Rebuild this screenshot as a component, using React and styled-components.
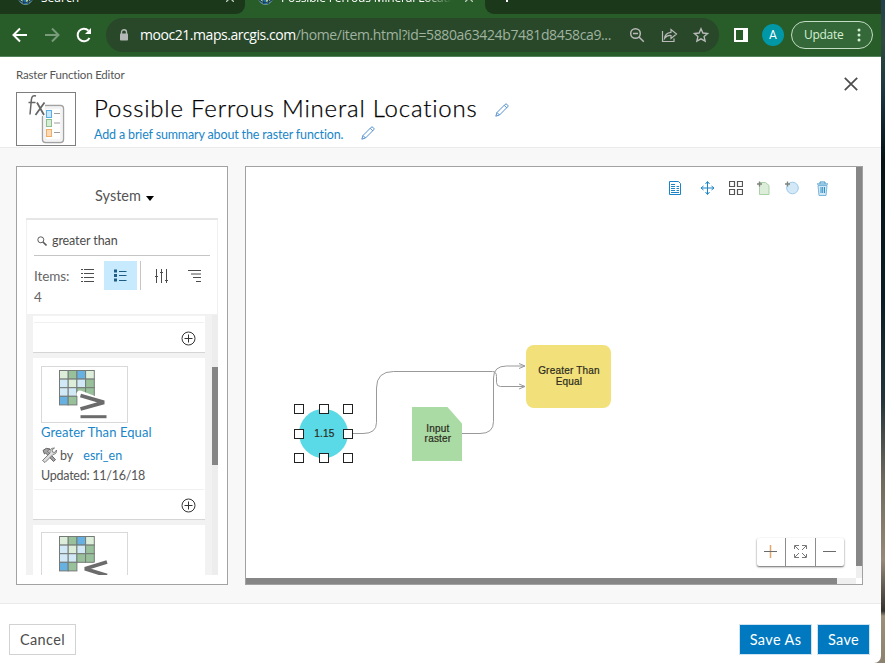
import React from "react";
import styled, { createGlobalStyle } from "styled-components";

const Global = createGlobalStyle`
  * { box-sizing: border-box; }
  body { margin: 0; background: #fff; font-family: Lato, "Open Sans", sans-serif; color: #555; }
  button { font: inherit; padding: 0; border: 0; background: none; color: inherit; }
  svg { display: block; flex: none; }
`;

const Desktop = styled.div`
  width: 885px;
  height: 663px;
  display: flex;
  overflow: hidden;
  background: linear-gradient(#22404d 0, #2f4a3d 40px, #1d3740 90px, #061218 160px, #0b1d24 300px, #24343a 400px, #6f6a5e 480px, #95897a 560px, #35322e 611px, #9b907d 616px, #8d8270 663px);
`;
const Window = styled.div`
  width: 881px;
  display: flex;
  flex-direction: column;
  background: #fff;
  border-bottom-right-radius: 7px;
  overflow: hidden;
`;

/* Browser chrome */
const TabStrip = styled.div`
  height: 14px;
  flex: none;
  display: flex;
  background: #285c29;
  overflow: hidden;
`;
const Tab = styled.div`
  width: ${(p) => p.$width}px;
  height: 14px;
  flex: none;
  display: flex;
  align-items: flex-start;
  padding-left: ${(p) => p.$pad}px;
  background: ${(p) => (p.$active ? "#285c29" : "#1b381b")};
  border-radius: ${(p) => p.$radius || "0"};
  color: #fff;
`;
const TabTitle = styled.div`
  font: 12px/16px "Open Sans", sans-serif;
  margin: -10px 0 0 8px;
  width: ${(p) => p.$width}px;
  letter-spacing: ${(p) => p.$spacing || 0}px;
  white-space: nowrap;
  overflow: hidden;
  ${(p) => p.$fade && "mask-image: linear-gradient(90deg, #000 82%, transparent);"}
`;
const TabGlobe = styled.svg`
  margin-top: -10px;
`;
const TabClose = styled.svg`
  margin: -6px 0 0 ${(p) => p.$gap}px;
`;
const Toolbar = styled.div`
  height: 43px;
  flex: none;
  display: flex;
  align-items: center;
  padding: 0 8px 1px 11px;
  background: #285c29;
  border-bottom: 1px solid #52835a;
`;
const NavButtons = styled.div`
  display: flex;
  gap: 14px;
  margin-right: 13px;
`;
const AddressBar = styled.div`
  width: 613px;
  height: 34px;
  flex: none;
  display: flex;
  align-items: center;
  border-radius: 17px;
  background: #284829;
  padding: 0 8px 0 13px;
`;
const Url = styled.div`
  width: 483px;
  margin-left: 11px;
  font: 14px/20px "Open Sans", sans-serif;
  letter-spacing: -0.37px;
  white-space: nowrap;
  color: #a0b2a0;
`;
const UrlHost = styled.span`
  color: #fff;
  letter-spacing: -0.45px;
`;
const AddressActions = styled.div`
  display: flex;
  gap: 14px;
  margin-left: 5px;
`;
const SidePanelIcon = styled.div`
  width: 14px;
  height: 14px;
  flex: none;
  margin-left: 15px;
  border: solid #fff;
  border-width: 2px 5px 2px 2px;
`;
const Avatar = styled.div`
  width: 22px;
  height: 22px;
  flex: none;
  margin-left: 14px;
  border-radius: 50%;
  background: #0097a7;
  color: #fff;
  text-align: center;
  font: 12px/22px Roboto, sans-serif;
`;
const UpdateButton = styled.button`
  width: 82px;
  height: 28px;
  flex: none;
  margin-left: 7px;
  display: flex;
  align-items: center;
  justify-content: space-between;
  padding: 0 11px 0 12px !important;
  border: 1px solid #c3dcc4 !important;
  border-radius: 14px;
  background: #356838 !important;
  color: #d3f0d4 !important;
  font: 12px/16px "Open Sans", sans-serif !important;
  letter-spacing: -0.3px;
`;

/* Page header */
const Header = styled.header`
  height: 91px;
  flex: none;
  display: flex;
  justify-content: space-between;
  padding: 10px 23px 0 16px;
  border-bottom: 1px solid #ebebeb;
`;
const Crumb = styled.div`
  font-size: 11.5px;
  line-height: 15px;
  letter-spacing: -0.18px;
  margin-bottom: 10px;
`;
const Heading = styled.div`
  display: flex;
  gap: 18px;
`;
const Thumb = styled.div`
  width: 60px;
  height: 54px;
  border: 1px solid #7e7e7e;
`;
const TitleLine = styled.div`
  display: flex;
  align-items: center;
  gap: 18px;
  height: 33px;
`;
const Title = styled.h1`
  width: 384px;
  margin: 0;
  padding-bottom: 1px;
  color: #000;
  font-size: 24px;
  line-height: 32px;
  font-weight: 300;
  letter-spacing: 0.8px;
  white-space: nowrap;
  -webkit-text-stroke: 0.25px currentColor;
`;
const EditIcon = styled.svg`
  margin: ${(p) => p.$drop || 0}px 0 0 -1px;
`;
const SummaryLine = styled.div`
  display: flex;
  gap: 18px;
  height: 18px;
`;
const Summary = styled.div`
  width: 250px;
  font-size: 12.5px;
  line-height: 19px;
  letter-spacing: -0.145px;
  color: #1a86c8;
  white-space: nowrap;
`;
const CloseButton = styled.button`
  height: 14px;
  margin-top: 10px;
`;

/* Editor area */
const Workspace = styled.main`
  height: 456px;
  flex: none;
  display: flex;
  gap: 17px;
  padding: 18px 18px 18px 16px;
  background: #f8f8f8;
  border-bottom: 1px solid #ebebeb;
`;
const Panel = styled.section`
  width: 212px;
  height: 419px;
  display: flex;
  flex-direction: column;
  padding: 0 9px;
  background: #fff;
  border: 1px solid #a2a2a2;
`;
const Category = styled.div`
  height: 53px;
  flex: none;
  display: flex;
  align-items: center;
  justify-content: center;
  gap: 5px;
  padding: 6px 0 0 5px;
  border-bottom: 2px solid #e6e6e6;
  font-size: 14.5px;
`;
const Caret = styled.span`
  width: 0;
  height: 0;
  margin-top: 5px;
  border: 4.5px solid transparent;
  border-top: 5px solid #000;
  border-bottom: 0;
`;
const Filters = styled.div`
  height: 95px;
  flex: none;
  padding: 7px 7px 0;
  border: solid #f1f1f1;
  border-width: 0 1px 1px;
`;
const SearchBox = styled.div`
  height: 29px;
  display: flex;
  align-items: center;
  gap: 5px;
  padding: 0 0 1px 3px;
  border-bottom: 1px solid #c5c5c5;
  font-size: 12.5px;
  letter-spacing: -0.1px;
  color: #4c4c4c;
`;
const FilterRow = styled.div`
  height: 29px;
  margin-top: 5px;
  display: flex;
  align-items: center;
`;
const FilterLabel = styled.div`
  width: 43px;
  flex: none;
  font-size: 13.5px;
  line-height: 14px;
  letter-spacing: -0.1px;
  color: #666;
`;
const ViewToggle = styled.button`
  width: 33px;
  height: 29px;
  flex: none;
  display: flex;
  align-items: center;
  justify-content: center;
  background: ${(p) => (p.$active ? "#c7eaff" : "none")} !important;
`;
const ToggleGroup = styled.div`
  display: flex;
  flex: none;
  padding-left: ${(p) => p.$pad || 0}px;
  margin-left: ${(p) => p.$gap || 0}px;
  border-left: ${(p) => (p.$divided ? "1px solid #c5c5c5" : "0")};
`;
const ListFrame = styled.div`
  height: 260px;
  flex: none;
  display: flex;
  background: #f2f2f2;
  overflow: hidden;
`;
const List = styled.div`
  width: 179px;
  padding: 1px 0 0 7px;
`;
const Card = styled.article`
  width: 172px;
  margin-bottom: 5px;
  padding-top: ${(p) => p.$pad}px;
  background: #fff;
  border-bottom: 1px solid #d5d5d5;
`;
const CardBody = styled.div`
  height: ${(p) => p.$height}px;
  padding: 0 8px;
`;
const CardFooter = styled.div`
  height: 30px;
  margin: 0 1px;
  padding: 2px 8px 0 0;
  display: flex;
  align-items: center;
  justify-content: flex-end;
  border-top: 1px solid #f0f0f0;
`;
const CardImage = styled.div`
  width: 87px;
  height: 57px;
  border: 1px solid #d9d9d9;
`;
const CardLine = styled.div`
  height: ${(p) => p.$height}px;
  display: flex;
  align-items: center;
  white-space: nowrap;
  font-size: ${(p) => p.$size || 13}px;
  letter-spacing: ${(p) => p.$spacing || 0}px;
`;
const Link = styled.a`
  color: #1a86c8;
  margin-left: ${(p) => p.$gap || 0}px;
`;
const By = styled.span`
  margin-left: 3px;
`;
const ListTrack = styled.div`
  width: 6px;
  margin-left: 7px;
  padding-top: 52px;
  background: #ededed;
`;
const ListThumb = styled.div`
  height: 98px;
  background: #868686;
`;

/* Diagram canvas */
const CanvasFrame = styled.section`
  position: relative;
  width: 618px;
  height: 419px;
  display: grid;
  grid-template: 411px 6px / 610px 6px;
  background: #fff;
  border: 1px solid #a2a2a2;
`;
const Diagram = styled.div`
  position: relative;
  overflow: hidden;
`;
const Track = styled.div`
  background: #efefef;
`;
const TrackThumb = styled.div`
  width: ${(p) => p.$width}px;
  height: ${(p) => p.$height}px;
  background: #868686;
`;
const Wires = styled.svg`
  position: absolute;
  inset: 0;
`;
const Node = styled.div`
  position: absolute;
  left: ${(p) => p.$x}px;
  top: ${(p) => p.$y}px;
  width: ${(p) => p.$w}px;
  height: ${(p) => p.$h}px;
  display: flex;
  align-items: center;
  justify-content: center;
  text-align: center;
  background: ${(p) => p.$fill};
  color: #2b2b20;
  font: 10px/${(p) => p.$line || 11}px "Liberation Sans", Arial, sans-serif;
  letter-spacing: 0.2px;
  -webkit-text-stroke: 0.2px currentColor;
  padding: 0 0 ${(p) => p.$lift || 0}px 2px;
`;
const FunctionNode = styled(Node)`
  border-radius: 8px;
`;
const RasterNode = styled(Node)`
  clip-path: polygon(0 0, 70% 0, 100% 31%, 100% 100%, 0 100%);
`;
const ConstantNode = styled(Node)`
  border-radius: 50%;
`;
const Handle = styled.i`
  position: absolute;
  left: ${(p) => p.$x}px;
  top: ${(p) => p.$y}px;
  width: 10px;
  height: 10px;
  border: 1px solid #222;
  background: #fff;
`;
const CanvasTools = styled.div`
  position: absolute;
  top: 13px;
  right: 32px;
  display: flex;
  align-items: center;
  gap: ${(p) => p.$gap}px;
`;
const SpacedTool = styled.span`
  margin-right: ${(p) => p.$space}px;
`;
const ZoomBar = styled.div`
  position: absolute;
  left: 511px;
  top: 371px;
  height: 28px;
  display: flex;
  border-radius: 2px;
  background: #fff;
  box-shadow: 0 1px 2px rgba(0, 0, 0, 0.6);
`;
const ZoomButton = styled.button`
  width: ${(p) => p.$width}px;
  display: flex;
  align-items: center;
  justify-content: center;
  padding: 0 1px 1px 0 !important;
  & + & { border-left: 1px solid #8c8c8c; }
`;

/* Footer */
const Footer = styled.footer`
  flex: 1;
  display: flex;
  align-items: flex-start;
  justify-content: space-between;
  padding: 20px 11px 0 9px;
`;
const FooterGroup = styled.div`
  display: flex;
  gap: 5px;
`;
const ActionButton = styled.button`
  width: ${(p) => p.$width}px;
  height: 31px;
  border: 1px solid ${(p) => (p.$primary ? "#cfe3f0" : "#d2d2d2")} !important;
  background: ${(p) => (p.$primary ? "#0079c1" : "#fff")} !important;
  color: ${(p) => (p.$primary ? "#fff" : "#4c4c4c")} !important;
  font-size: 14.5px !important;
  letter-spacing: 0.35px;
`;

const Globe = () => (
  <TabGlobe width="15" height="15" viewBox="0 0 15 15">
    <circle cx="7.5" cy="7.5" r="7" fill="#1f6eb0" stroke="#7d9b8d" />
    <path d="M3 3l4-1 2 3-3 3-3-1zM8 9l4-3 1 3-3 4-2-1zM2 9l3 1 1 3-2-1z" fill="#b4cf94" />
    <path d="M1 10q6 5 13 0M1 7h13M5 1q-2 7 1 13M10 1q2 7 0 13" fill="none" stroke="#16394f" />
  </TabGlobe>
);
const CloseMark = ({ gap }) => (
  <TabClose $gap={gap} width="8" height="8" viewBox="0 0 8 8" stroke="#bdccbd" strokeWidth="1.3">
    <path d="M0 0l8 8M8 0l-8 8" />
  </TabClose>
);
const Pencil = ({ drop }) => (
  <EditIcon $drop={drop} width="14" height="14" viewBox="0 0 14 14" fill="none" stroke="#3f83c8" strokeWidth=".9">
    <path d="M.8 13.200l1.200-3.700L10.200 1.300q.9-.8 1.700 0l.8.8q.8.900 0 1.700L4.500 12zM2 9.500L4.500 12M9.200 2.300l2.500 2.500" />
  </EditIcon>
);
const AddCircle = () => (
  <svg width="15" height="15" viewBox="0 0 15 15" fill="none" stroke="#333">
    <circle cx="7.500" cy="7.500" r="6.500" />
    <path d="M7.500 3.500v8M3.500 7.500h8" />
  </svg>
);

const GREEN = "#98c09a", PALE = "#dcedd9", BLUE = "#66b1e2", SKY = "#d1e8f7";
const CELLS = [
  [PALE, GREEN, BLUE, PALE],
  [SKY, PALE, SKY, GREEN],
  [SKY, SKY, GREEN, GREEN],
  [BLUE, GREEN, PALE, PALE],
];
const RasterArt = ({ less }) => (
  <svg width="85" height="55" viewBox="0 0 85 55">
    {CELLS.map((row, r) =>
      row.map((fill, c) => {
        if (r === 3 && c > 1) return null;
        return (
          <rect key={`${r}${c}`} x={17.5 + c * 8.7} y={3.5 + r * 8.6} width="8.700" height="8.600" fill={fill} stroke="#747b76" />
        );
      })
    )}
    {less ? (
      <g fill="none">
        <path d="M65 30L41 36.500L65 43" stroke="#fff" strokeWidth="7" strokeLinejoin="round" />
        <path d="M65 29L43 35.800L65 42.500" stroke="#6b6b6b" strokeWidth="3.800" strokeLinejoin="bevel" />
      </g>
    ) : (
      <g fill="none">
        <path d="M38 27L60 35.500L38 44" stroke="#fff" strokeWidth="7" strokeLinejoin="round" strokeLinecap="round" />
        <path d="M38.500 28.500L62 35.300L38.500 42" stroke="#6b6b6b" strokeWidth="3.800" strokeLinejoin="bevel" />
        <path d="M38.500 49.700h26" stroke="#6b6b6b" strokeWidth="3" />
      </g>
    )}
  </svg>
);
const FunctionArt = () => (
  <svg width="58" height="52" viewBox="0 0 58 52" fill="none">
    <rect x="25.500" y="12.500" width="21" height="37" rx="3" fill="#fff" stroke="#a2a2a2" strokeWidth="1.400" />
    <rect x="28" y="15" width="16" height="32" stroke="#e8e8e8" />
    <path d="M20 10l5 12-6 1h9V10z" fill="#fff" />
    <g strokeWidth="1">
      <rect x="29.500" y="17.500" width="5" height="7" fill="#c9e7fb" stroke="#5aaee5" />
      <rect x="29.500" y="26.500" width="5" height="7" fill="#d7ead5" stroke="#8bbf8b" />
      <rect x="29.500" y="36.500" width="5" height="7" fill="#fbdab8" stroke="#efad68" />
    </g>
    <path d="M37 20.500h6M37 30h6M37 39.500h6" stroke="#9d9d9d" />
    <path d="M19 3q-4-1.500-4.600 3.500L13 21.500M11.500 9.500h7" stroke="#666" strokeWidth="1.500" />
    <path d="M20 9.500L27 22M27.500 9.500L18.500 22" stroke="#666" strokeWidth="1.800" />
  </svg>
);
const ToolsIcon = () => (
  <svg width="16" height="16" viewBox="0 0 16 16" fill="none" stroke="#666" strokeWidth="1">
    <path d="M2 3.500q3-3.500 7-1.500L6.500 4l8 8.700-2 1.800L4.700 6 3.500 7z" fill="#a4a4a4" />
    <path d="M13.500 1l-2.500 2 .5 2 2 .5 2-2.500q.5 4-3.500 4.500L4 15.500l-2.500-2L9 6Q8 1 13.500 1z" fill="#ddd" strokeWidth=".8" />
  </svg>
);

const HANDLES = [[48, 237], [72.500, 237], [97, 237], [48, 261.500], [97, 261.500], [48, 286], [72.500, 286], [97, 286]];

export default function App() {
  return (
    <>
      <Global />
      <Desktop>
        <Window>
          <TabStrip>
            <Tab $width={245} $pad={18} $radius="0 0 9px 0">
              <Globe /><TabTitle $width={176}>Search</TabTitle><CloseMark gap={9} />
            </Tab>
            <Tab $width={240} $pad={13} $active>
              <Globe /><TabTitle $width={172} $spacing={-0.15} $fade>Possible Ferrous Mineral Locations</TabTitle><CloseMark gap={12} />
            </Tab>
            <Tab $width={396} $pad={21} $radius="0 0 0 9px">
              <svg width="2" height="3"><path d="M0 0h2v2h-2z" fill="#fff" /></svg>
            </Tab>
          </TabStrip>

          <Toolbar>
            <NavButtons>
              <svg width="18" height="18" viewBox="0 0 18 18" fill="none" stroke="#fff" strokeWidth="2"><path d="M16 9H3M9 2.500L2.500 9L9 15.500" /></svg>
              <svg width="18" height="18" viewBox="0 0 18 18" fill="none" stroke="#799b7c" strokeWidth="2"><path d="M2 9h13M9 2.500L15.500 9L9 15.500" /></svg>
              <svg width="18" height="18" viewBox="0 0 18 18" fill="none" stroke="#fff" strokeWidth="2"><path d="M14.500 12A6.300 6.300 0 1 1 13.500 4.600" /><path d="M16 2v6h-6z" fill="#fff" stroke="none" /></svg>
            </NavButtons>
            <AddressBar>
              <svg width="10" height="12" viewBox="0 0 10 12"><path d="M2.500 5V3.200a2.500 2.500 0 0 1 5 0V5" fill="none" stroke="#b4b9b8" strokeWidth="1.400" /><rect x="1" y="4.500" width="8" height="7" rx=".8" fill="#b4b9b8" /></svg>
              <Url><UrlHost>mooc21.maps.arcgis.com</UrlHost>/home/item.html?id=5880a63424b7481d8458ca9...</Url>
              <AddressActions>
                <svg width="18" height="18" viewBox="0 0 18 18" fill="none" stroke="#b9b9b9" strokeWidth="1.500"><circle cx="7.500" cy="7.500" r="4.800" /><path d="M11 11l4.800 4.800M5 7.500h5" /></svg>
                <svg width="18" height="18" viewBox="0 0 18 18" fill="none" stroke="#b9b9b9" strokeWidth="1.200"><path d="M2.500 5v10.500H14v-3M4.500 12.500Q5 7 11 6.300V3.500L16.500 8L11 12.500V9.500Q7 9 4.500 12.500z" /></svg>
                <svg width="18" height="18" viewBox="0 0 18 18" fill="none" stroke="#b9b9b9" strokeWidth="1.400"><path d="M9 2.700l1.900 4.300 4.700.5-3.500 3.100 1 4.600L9 12.800l-4.100 2.400 1-4.600-3.500-3.100 4.700-.5z" /></svg>
              </AddressActions>
            </AddressBar>
            <SidePanelIcon />
            <Avatar>A</Avatar>
            <UpdateButton>
              Update
              <svg width="4" height="14" viewBox="0 0 4 14" fill="#d3f0d4"><circle cx="2" cy="2" r="1.500" /><circle cx="2" cy="7" r="1.500" /><circle cx="2" cy="12" r="1.500" /></svg>
            </UpdateButton>
          </Toolbar>

          <Header>
            <div>
              <Crumb>Raster Function Editor</Crumb>
              <Heading>
                <Thumb><FunctionArt /></Thumb>
                <div>
                  <TitleLine><Title>Possible Ferrous Mineral Locations</Title><Pencil drop={3} /></TitleLine>
                  <SummaryLine><Summary>Add a brief summary about the raster function.</Summary><Pencil drop={1} /></SummaryLine>
                </div>
              </Heading>
            </div>
            <CloseButton aria-label="Close">
              <svg width="14" height="14" viewBox="0 0 14 14" stroke="#4c4c4c" strokeWidth="1.700"><path d="M.8 .8l12.400 12.400M13.200 .8L.8 13.200" /></svg>
            </CloseButton>
          </Header>

          <Workspace>
            <Panel>
              <Category>System <Caret /></Category>
              <Filters>
                <SearchBox>
                  <svg width="10" height="10" viewBox="0 0 10 10" fill="none" stroke="#5c5c5c"><circle cx="3.800" cy="3.800" r="3" /><path d="M6 6l3.500 3.500" strokeWidth="1.600" /></svg>
                  greater than
                </SearchBox>
                <FilterRow>
                  <FilterLabel>Items:</FilterLabel>
                  <ToggleGroup $gap={-6}>
                    <ViewToggle>
                      <svg width="13" height="13" viewBox="0 0 13 13" stroke="#4c4c4c"><path d="M3 .5h10M3 4.500h10M3 8.500h10M3 12.500h10M0 .5h2M0 4.500h2M0 8.500h2M0 12.500h2" /></svg>
                    </ViewToggle>
                    <ViewToggle $active>
                      <svg width="13" height="13" viewBox="0 0 13 13" stroke="#1d5c84"><path d="M5 2.500h7.500M5 6.500h7.500M5 11.500h7.500" /><path d="M0 2h3M0 6.500h3M0 11h3" strokeWidth="3" /></svg>
                    </ViewToggle>
                  </ToggleGroup>
                  <ToggleGroup $divided $gap={3} $pad={4}>
                    <ViewToggle>
                      <svg width="13" height="14" viewBox="0 0 13 14" stroke="#4c4c4c"><path d="M1.500 0v14M6.500 0v14M11.500 0v14M0 7.500h3M5 3.500h3M10 11.500h3" /></svg>
                    </ViewToggle>
                    <ViewToggle>
                      <svg width="13" height="12" viewBox="0 0 13 12" stroke="#4c4c4c"><path d="M0 .5h13M3 4h10M5 7.500h8M8 11.500h5" /></svg>
                    </ViewToggle>
                  </ToggleGroup>
                </FilterRow>
                <FilterLabel>4</FilterLabel>
              </Filters>
              <ListFrame>
                <List>
                  <Card $pad={6}><CardFooter><AddCircle /></CardFooter></Card>
                  <Card $pad={8}>
                    <CardBody $height={123}>
                      <CardImage><RasterArt /></CardImage>
                      <CardLine $height={17} $size={13} $spacing={0.08}><Link>Greater Than Equal</Link></CardLine>
                      <CardLine $height={30} $size={12.5}><ToolsIcon /><By>by</By><Link $gap={10}>esri_en</Link></CardLine>
                      <CardLine $height={11} $size={12.5} $spacing={-0.25}>Updated: 11/16/18</CardLine>
                    </CardBody>
                    <CardFooter><AddCircle /></CardFooter>
                  </Card>
                  <Card $pad={7}><CardBody $height={123}><CardImage><RasterArt less /></CardImage></CardBody></Card>
                </List>
                <ListTrack><ListThumb /></ListTrack>
              </ListFrame>
            </Panel>

            <CanvasFrame>
              <Diagram>
                <Wires width="610" height="411" fill="none" stroke="#999">
                  <path d="M107 266.500h10q13.500 0 13.500-11V221q0-16.500 17-16.500h99q4 0 4 5v6q0 4 4 4h24" />
                  <path d="M216 266.500h18q13.500 0 13.500-12V211q0-12 13-12h18" />
                  <path d="M273 196.500l6 2.500-6 2.500M273 217l6 2.500-6 2.500" />
                </Wires>
                <FunctionNode $x={279.5} $y={177.5} $w={85} $h={63} $lift={1} $fill="#f2e07a">Greater Than<br />Equal</FunctionNode>
                <RasterNode $x={166} $y={239.5} $w={50} $h={54.5} $fill="#aadba4" $line={10}>Input<br />raster</RasterNode>
                <ConstantNode $x={53} $y={242} $w={49} $h={49} $fill="#5ad9e6">1.15</ConstantNode>
                {HANDLES.map(([x, y]) => <Handle key={`${x}-${y}`} $x={x} $y={y} />)}
              </Diagram>
              <Track><TrackThumb $width={6} $height={399} /></Track>
              <Track><TrackThumb $width={591} $height={6} /></Track>

              <CanvasTools $gap={14}>
                <SpacedTool $space={2}><svg width="16" height="16" viewBox="0 0 16 16" fill="none" stroke="#1a84c6"><path d="M2.500 1.500h9l2 2v11h-11z" /><path d="M4 4.500h4M4 6.500h4M4 8.500h4M4 10.500h4M4 12.500h8M9.500 6.500h2.500M9.500 8.500h2.500M9.500 10.500h2.500" strokeWidth="1.200" /></svg></SpacedTool>
                <svg width="16" height="16" viewBox="0 0 16 16" fill="none" stroke="#1a84c6"><path d="M2.500 8h12M8.500 2v12M6.500 4l2-2.500 2 2.500M6.500 12l2 2.500 2-2.500M4.500 6L2 8l2.500 2M12.500 6L15 8l-2.500 2" /></svg>
                <svg width="14" height="14" viewBox="0 0 14 14" fill="none" stroke="#555"><path d="M.5 .5h5v5h-5zM8.500 .5h5v5h-5zM.5 8.500h5v5h-5zM8.500 8.500h5v5h-5z" strokeWidth="1.200" /></svg>
                <svg width="14" height="14" viewBox="0 0 14 14"><path d="M2.500 1.500h6l3.500 3v9H2.500z" fill="#dceeda" stroke="#a9d2a7" /><path d="M0 3h5M2.500 .5v5" stroke="#7f837c" strokeWidth="1.400" /></svg>
                <SpacedTool $space={1}><svg width="14" height="14" viewBox="0 0 14 14"><circle cx="7.500" cy="7" r="5.800" fill="#d3e9f8" stroke="#9ac9e8" /><path d="M0 3h5M2.500 .5v5" stroke="#7f837c" strokeWidth="1.400" /></svg></SpacedTool>
                <svg width="16" height="16" viewBox="0 0 16 16" fill="none" stroke="#318fc6"><path d="M4 5.500h9l-1 10H5z" fill="#d3e9f6" stroke="#79b6dc" /><path d="M3 4h11M6 3.500V2h5v1.500M7 7v6M8.700 7v6M10.500 7v6" /></svg>
              </CanvasTools>

              <ZoomBar>
                <ZoomButton $width={28} aria-label="Zoom in"><svg width="13" height="13" viewBox="0 0 13 13"><path d="M6.500 0v13" stroke="#e2a66b" strokeWidth="1.500" /><path d="M0 6.500h13" stroke="#6b6b6b" /></svg></ZoomButton>
                <ZoomButton $width={30} aria-label="Fit"><svg width="13" height="13" viewBox="0 0 13 13" fill="none" stroke="#777"><path d="M.5 4V.5H5M8 .5h4.500V4M.5 9v3.500H5M8 12.500h4.500V9M1 1l4 4M12 1L8 5M1 12l4-4M12 12L8 8" /></svg></ZoomButton>
                <ZoomButton $width={29} aria-label="Zoom out"><svg width="13" height="13" viewBox="0 0 13 13"><path d="M0 6.500h13" stroke="#6b6b6b" /></svg></ZoomButton>
              </ZoomBar>
            </CanvasFrame>
          </Workspace>

          <Footer>
            <ActionButton $width={67}>Cancel</ActionButton>
            <FooterGroup>
              <ActionButton $primary $width={73}>Save As</ActionButton>
              <ActionButton $primary $width={53}>Save</ActionButton>
            </FooterGroup>
          </Footer>
        </Window>
      </Desktop>
    </>
  );
}
